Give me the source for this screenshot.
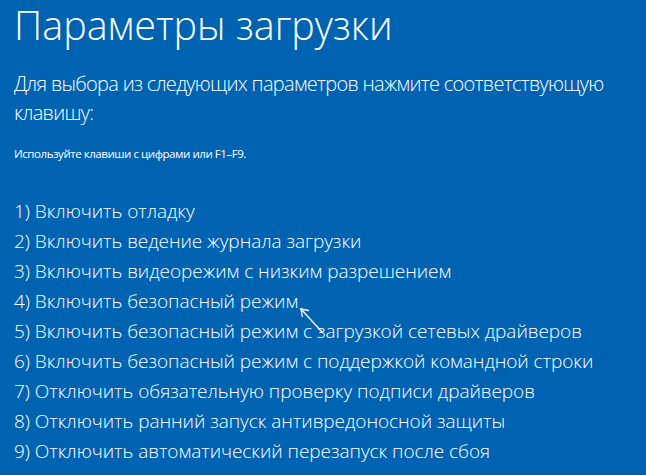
import React from "react";

const items = [
  "1) Включить отладку",
  "2) Включить ведение журнала загрузки",
  "3) Включить видеорежим с низким разрешением",
  "4) Включить безопасный режим",
  "5) Включить безопасный режим с загрузкой сетевых драйверов",
  "6) Включить безопасный режим с поддержкой командной строки",
  "7) Отключить обязательную проверку подписи драйверов",
  "8) Отключить ранний запуск антивредоносной защиты",
  "9) Отключить автоматический перезапуск после сбоя",
];

export default function App() {
  return (
    <div className="relative w-[646px] h-[475px] overflow-hidden bg-[#0063b1] text-white pl-[14px] font-['Open_Sans',sans-serif]">
      <h1 className="pt-[2px] text-[39.5px] font-light leading-[46px] whitespace-nowrap">
        Параметры загрузки
      </h1>
      <p className="mt-[21px] text-[20px] font-light leading-[29px] tracking-[-0.7px] w-[610px]">
        Для выбора из следующих параметров нажмите соответствующую клавишу:
      </p>
      <p className="mt-[17px] text-[11.5px] leading-[20px] tracking-[-0.45px]">
        Используйте клавиши с цифрами или F1–F9.
      </p>
      <ul className="mt-[32px]">
        {items.map((t) => (
          <li key={t} className="text-[19px] font-light leading-[30px] tracking-[-0.05px] whitespace-nowrap">
            {t}
          </li>
        ))}
      </ul>
      <svg
        className="absolute left-[296px] top-[304px]"
        width="34"
        height="34"
        viewBox="0 0 34 34"
        fill="none"
        stroke="white"
        strokeWidth="1.3"
        strokeLinecap="round"
      >
        <path d="M5 5 L26 28" />
        <path d="M5 5 L12.5 6.5" />
        <path d="M5 5 L6.3 12.5" />
      </svg>
    </div>
  );
}
